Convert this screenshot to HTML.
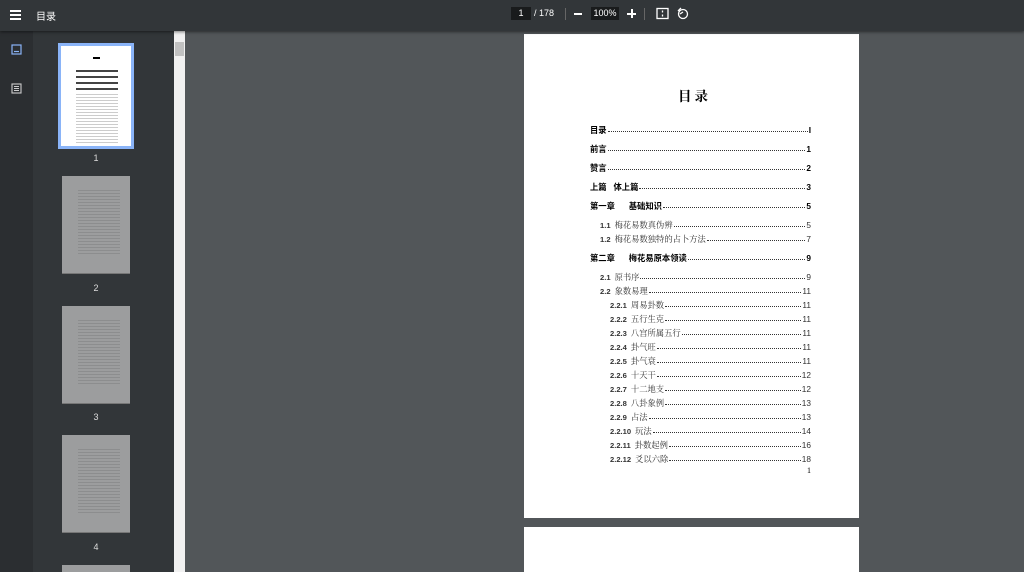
<!DOCTYPE html>
<html><head><meta charset="utf-8"><style>
*{margin:0;padding:0;box-sizing:border-box}
html,body{width:1024px;height:572px;overflow:hidden}
body{background:#525659;font-family:"Liberation Sans","Noto Sans CJK SC",sans-serif;position:relative}
#tb{position:absolute;left:0;top:0;width:1024px;height:31px;background:#323639;box-shadow:0 1px 3px rgba(0,0,0,.5);z-index:5;color:#fff}
#side{position:absolute;left:0;top:31px;width:174px;height:541px;background:#323639}
#rail{position:absolute;left:0;top:31px;width:33px;height:541px;background:#2b2e31}
#sb{position:absolute;left:174px;top:31px;width:11px;height:541px;background:#f1f1f1}
.th{position:absolute;left:62px;width:68px;height:98px;background:#9c9d9e;border-bottom:1px solid #777;overflow:hidden}
.th::after{content:"";position:absolute;left:16px;right:10px;top:12px;bottom:18px;background:repeating-linear-gradient(#9c9d9e 0 2px,#8c8d8e 2px 3px)}
.lb{position:absolute;left:90px;width:12px;text-align:center;color:#ddd;font-size:9px}
.page{position:absolute;left:524px;width:335px;background:#fff}
.r{position:absolute;left:590px;width:221px;display:flex;align-items:baseline;font-size:8.3px;color:#000;white-space:nowrap;font-family:"Liberation Sans","Noto Serif CJK SC",serif}
.r .d{flex:1;border-bottom:1px dotted #333;margin:0 1px;transform:translateY(-1px)}
.b{font-weight:bold;font-family:"Liberation Sans","Noto Sans CJK SC",sans-serif}
.s{color:#333}
.s span:first-child{font-family:"Liberation Sans",sans-serif;font-weight:bold;font-size:7.6px;margin-right:4px}
</style></head><body>
<div id="tb">
<div style="position:absolute;left:10px;top:10px;width:11px;height:2px;background:#fff;box-shadow:0 4px #fff,0 8px #fff"></div>
<div style="position:absolute;left:36px;top:8px;font-size:10px;font-family:'Noto Sans CJK SC',sans-serif">目录</div>
<div style="position:absolute;left:511px;top:7px;width:20px;height:13px;background:#191b1c;font-size:9px;text-align:center;line-height:13px">1</div>
<div style="position:absolute;left:534px;top:8px;font-size:9px">/ 178</div>
<div style="position:absolute;left:565px;top:8px;width:1px;height:12px;background:#666"></div>
<div style="position:absolute;left:574px;top:13px;width:8px;height:1.5px;background:#fff"></div>
<div style="position:absolute;left:591px;top:7px;width:28px;height:13px;background:#191b1c;font-size:9px;text-align:center;line-height:13px">100%</div>
<div style="position:absolute;left:627px;top:13px;width:9px;height:1.5px;background:#fff"></div>
<div style="position:absolute;left:631px;top:9px;width:1.5px;height:9px;background:#fff"></div>
<div style="position:absolute;left:644px;top:8px;width:1px;height:12px;background:#666"></div>
<svg style="position:absolute;left:656px;top:7px" width="13" height="13" viewBox="0 0 13 13" fill="none" stroke="#fff" stroke-width="1.3"><rect x="1" y="1.5" width="11" height="10"/><path d="M6.5 3.5v2M6.5 7.5v2"/></svg>
<svg style="position:absolute;left:676px;top:6px" width="13" height="14" viewBox="0 0 13 14" fill="none" stroke="#fff" stroke-width="1.3"><circle cx="7" cy="8" r="4.5"/><path d="M2 5l3-3M4 8l3-2" /></svg>
</div>
<div id="side"></div><div id="rail"></div>
<svg style="position:absolute;left:11px;top:44px" width="11" height="11" viewBox="0 0 11 11" fill="none" stroke="#8ab4f8" stroke-width="1.2"><rect x="1" y="1" width="9" height="9"/><path d="M3 7.5h5"/></svg>
<svg style="position:absolute;left:11px;top:83px" width="11" height="11" viewBox="0 0 11 11" fill="none" stroke="#ccc" stroke-width="1.1"><rect x="1" y="1" width="9" height="9"/><path d="M3 3.5h5M3 5.5h5M3 7.5h5"/></svg>
<div style="position:absolute;left:58px;top:43px;width:76px;height:106px;background:#8ab4f8;padding:3px"><div style="width:70px;height:100px;background:#fff;position:relative">
<div style="position:absolute;left:32px;top:11px;width:7px;height:2px;background:#000"></div>
<div style="position:absolute;left:15px;right:13px;top:20px;height:24px;background:repeating-linear-gradient(#fff 0 4px,#444 4px 6px)"></div>
<div style="position:absolute;left:15px;right:13px;top:46px;height:52px;background:repeating-linear-gradient(#fff 0 2px,#ccc 2px 3px)"></div></div></div>
<div class="lb" style="top:153px">1</div>
<div class="th" style="top:176px"></div><div class="lb" style="top:283px">2</div>
<div class="th" style="top:306px"></div><div class="lb" style="top:412px">3</div>
<div class="th" style="top:435px"></div><div class="lb" style="top:542px">4</div>
<div class="th" style="top:565px;height:7px;border:0"></div>
<div id="sb"><div style="position:absolute;left:1px;top:11px;width:9px;height:14px;background:#c1c1c1"></div></div>
<div class="page" style="top:34px;height:484px"></div>
<div class="page" style="top:527px;height:45px"></div>
<div style="position:absolute;left:678px;top:85px;font-size:13.5px;font-weight:bold;letter-spacing:3px;font-family:'Noto Serif CJK SC',serif">目录</div>
<div class="r b" style="top:124px"><span>目录</span><span class="d"></span><span>I</span></div>
<div class="r b" style="top:143px"><span>前言</span><span class="d"></span><span>1</span></div>
<div class="r b" style="top:162px"><span>赞言</span><span class="d"></span><span>2</span></div>
<div class="r b" style="top:181px"><span>上篇&nbsp;&nbsp;&nbsp;体上篇</span><span class="d"></span><span>3</span></div>
<div class="r b" style="top:200px"><span>第一章&nbsp;&nbsp;&nbsp;&nbsp;&nbsp;&nbsp;基础知识</span><span class="d"></span><span>5</span></div>
<div class="r s" style="top:219px;left:600px;width:211px"><span>1.1</span><span>梅花易数真伪辨</span><span class="d"></span><span>5</span></div>
<div class="r s" style="top:233px;left:600px;width:211px"><span>1.2</span><span>梅花易数独特的占卜方法</span><span class="d"></span><span>7</span></div>
<div class="r b" style="top:252px"><span>第二章&nbsp;&nbsp;&nbsp;&nbsp;&nbsp;&nbsp;梅花易原本领读</span><span class="d"></span><span>9</span></div>
<div class="r s" style="top:271px;left:600px;width:211px"><span>2.1</span><span>原书序</span><span class="d"></span><span>9</span></div>
<div class="r s" style="top:285px;left:600px;width:211px"><span>2.2</span><span>象数易理</span><span class="d"></span><span>11</span></div>
<div class="r s" style="top:299px;left:610px;width:201px"><span>2.2.1</span><span>周易卦数</span><span class="d"></span><span>11</span></div>
<div class="r s" style="top:313px;left:610px;width:201px"><span>2.2.2</span><span>五行生克</span><span class="d"></span><span>11</span></div>
<div class="r s" style="top:327px;left:610px;width:201px"><span>2.2.3</span><span>八宫所属五行</span><span class="d"></span><span>11</span></div>
<div class="r s" style="top:341px;left:610px;width:201px"><span>2.2.4</span><span>卦气旺</span><span class="d"></span><span>11</span></div>
<div class="r s" style="top:355px;left:610px;width:201px"><span>2.2.5</span><span>卦气衰</span><span class="d"></span><span>11</span></div>
<div class="r s" style="top:369px;left:610px;width:201px"><span>2.2.6</span><span>十天干</span><span class="d"></span><span>12</span></div>
<div class="r s" style="top:383px;left:610px;width:201px"><span>2.2.7</span><span>十二地支</span><span class="d"></span><span>12</span></div>
<div class="r s" style="top:397px;left:610px;width:201px"><span>2.2.8</span><span>八卦象例</span><span class="d"></span><span>13</span></div>
<div class="r s" style="top:411px;left:610px;width:201px"><span>2.2.9</span><span>占法</span><span class="d"></span><span>13</span></div>
<div class="r s" style="top:425px;left:610px;width:201px"><span>2.2.10</span><span>玩法</span><span class="d"></span><span>14</span></div>
<div class="r s" style="top:439px;left:610px;width:201px"><span>2.2.11</span><span>卦数起例</span><span class="d"></span><span>16</span></div>
<div class="r s" style="top:453px;left:610px;width:201px"><span>2.2.12</span><span>爻以六除</span><span class="d"></span><span>18</span></div>
<div style="position:absolute;left:807px;top:466px;font-size:8px;font-family:'Liberation Serif',serif">1</div>
</body></html>
